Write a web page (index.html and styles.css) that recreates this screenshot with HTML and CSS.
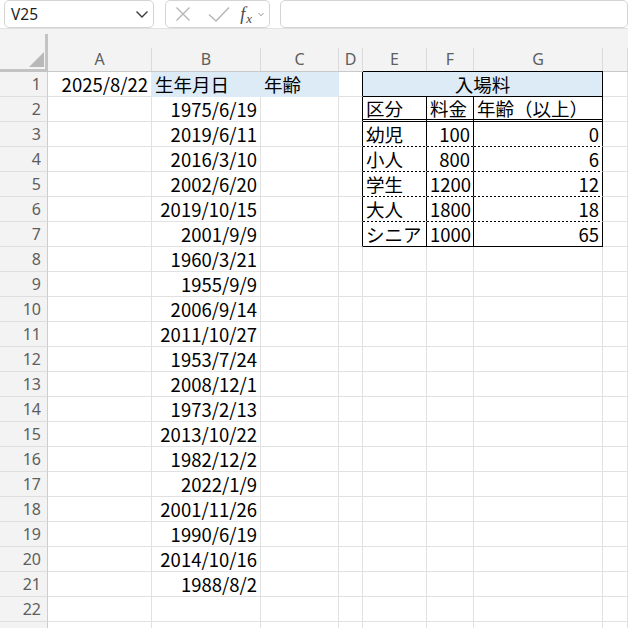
FILE: index.html
```html
<!DOCTYPE html>
<html lang="ja">
<head>
<meta charset="utf-8">
<title>Sheet</title>
<link rel="stylesheet" href="styles.css">
</head>
<body>
<div class="toolbar">
  <div class="namebox">
    <span class="ref">V25</span>
    <svg class="chev" width="14" height="10" viewBox="0 0 14 10"><polyline points="1.5,2.5 7,8 12.5,2.5" fill="none" stroke="#3a3a3a" stroke-width="1.4"/></svg>
  </div>
  <div class="fxbox">
    <svg width="16" height="16" viewBox="0 0 16 16"><path d="M1.5 1.5 L14.5 14.5 M14.5 1.5 L1.5 14.5" stroke="#b5b5b5" stroke-width="1.4" fill="none"/></svg>
    <svg width="22" height="16" viewBox="0 0 22 16"><polyline points="1,8.5 8,15 21,1.5" stroke="#b5b5b5" stroke-width="1.4" fill="none"/></svg>
    <span class="fx"><span class="f">f</span><span class="x">x</span></span>
    <svg width="6" height="5" viewBox="0 0 6 5"><polyline points="0.5,1 3,3.8 5.5,1" stroke="#9a9a9a" stroke-width="1" fill="none"/></svg>
  </div>
  <div class="formula"></div>
</div>

<div class="sheet">
  <div class="corner"><div class="cbox"><div class="tri"></div></div></div>
  <div class="colh"><span>A</span></div>
  <div class="colh"><span>B</span></div>
  <div class="colh"><span>C</span></div>
  <div class="colh"><span>D</span></div>
  <div class="colh tb"><span>E</span></div>
  <div class="colh tb"><span>F</span></div>
  <div class="colh tb"><span>G</span></div>
  <div class="colh"><span></span></div>

  <div class="rh">1</div><div class="c r fillA">2025/8/22</div><div class="c fill">生年月日</div><div class="c fill">年齢</div><div class="c dk"></div><div class="c t1 ctr">入場料</div><div class="c"></div>
  <div class="rh">2</div><div class="c"></div><div class="c r">1975/6/19</div><div class="c"></div><div class="c dk"></div><div class="c t2">区分</div><div class="c t2">料金</div><div class="c t2">年齢（以上）</div><div class="c"></div>
  <div class="rh">3</div><div class="c"></div><div class="c r">2019/6/11</div><div class="c"></div><div class="c dk"></div><div class="c td">幼児</div><div class="c td r">100</div><div class="c td r">0</div><div class="c"></div>
  <div class="rh">4</div><div class="c"></div><div class="c r">2016/3/10</div><div class="c"></div><div class="c dk"></div><div class="c td">小人</div><div class="c td r">800</div><div class="c td r">6</div><div class="c"></div>
  <div class="rh">5</div><div class="c"></div><div class="c r">2002/6/20</div><div class="c"></div><div class="c dk"></div><div class="c td">学生</div><div class="c td r">1200</div><div class="c td r">12</div><div class="c"></div>
  <div class="rh">6</div><div class="c"></div><div class="c r">2019/10/15</div><div class="c"></div><div class="c dk"></div><div class="c td">大人</div><div class="c td r">1800</div><div class="c td r">18</div><div class="c"></div>
  <div class="rh">7</div><div class="c"></div><div class="c r">2001/9/9</div><div class="c"></div><div class="c dk"></div><div class="c tl">シニア</div><div class="c tl r">1000</div><div class="c tl r">65</div><div class="c"></div>
  <div class="rh">8</div><div class="c"></div><div class="c r">1960/3/21</div><div class="c"></div><div class="c"></div><div class="c"></div><div class="c"></div><div class="c"></div><div class="c"></div>
  <div class="rh">9</div><div class="c"></div><div class="c r">1955/9/9</div><div class="c"></div><div class="c"></div><div class="c"></div><div class="c"></div><div class="c"></div><div class="c"></div>
  <div class="rh">10</div><div class="c"></div><div class="c r">2006/9/14</div><div class="c"></div><div class="c"></div><div class="c"></div><div class="c"></div><div class="c"></div><div class="c"></div>
  <div class="rh">11</div><div class="c"></div><div class="c r">2011/10/27</div><div class="c"></div><div class="c"></div><div class="c"></div><div class="c"></div><div class="c"></div><div class="c"></div>
  <div class="rh">12</div><div class="c"></div><div class="c r">1953/7/24</div><div class="c"></div><div class="c"></div><div class="c"></div><div class="c"></div><div class="c"></div><div class="c"></div>
  <div class="rh">13</div><div class="c"></div><div class="c r">2008/12/1</div><div class="c"></div><div class="c"></div><div class="c"></div><div class="c"></div><div class="c"></div><div class="c"></div>
  <div class="rh">14</div><div class="c"></div><div class="c r">1973/2/13</div><div class="c"></div><div class="c"></div><div class="c"></div><div class="c"></div><div class="c"></div><div class="c"></div>
  <div class="rh">15</div><div class="c"></div><div class="c r">2013/10/22</div><div class="c"></div><div class="c"></div><div class="c"></div><div class="c"></div><div class="c"></div><div class="c"></div>
  <div class="rh">16</div><div class="c"></div><div class="c r">1982/12/2</div><div class="c"></div><div class="c"></div><div class="c"></div><div class="c"></div><div class="c"></div><div class="c"></div>
  <div class="rh">17</div><div class="c"></div><div class="c r">2022/1/9</div><div class="c"></div><div class="c"></div><div class="c"></div><div class="c"></div><div class="c"></div><div class="c"></div>
  <div class="rh">18</div><div class="c"></div><div class="c r">2001/11/26</div><div class="c"></div><div class="c"></div><div class="c"></div><div class="c"></div><div class="c"></div><div class="c"></div>
  <div class="rh">19</div><div class="c"></div><div class="c r">1990/6/19</div><div class="c"></div><div class="c"></div><div class="c"></div><div class="c"></div><div class="c"></div><div class="c"></div>
  <div class="rh">20</div><div class="c"></div><div class="c r">2014/10/16</div><div class="c"></div><div class="c"></div><div class="c"></div><div class="c"></div><div class="c"></div><div class="c"></div>
  <div class="rh">21</div><div class="c"></div><div class="c r">1988/8/2</div><div class="c"></div><div class="c"></div><div class="c"></div><div class="c"></div><div class="c"></div><div class="c"></div>
  <div class="rh">22</div><div class="c"></div><div class="c"></div><div class="c"></div><div class="c"></div><div class="c"></div><div class="c"></div><div class="c"></div><div class="c"></div>
  <div class="rh"></div><div class="c"></div><div class="c"></div><div class="c"></div><div class="c"></div><div class="c"></div><div class="c"></div><div class="c"></div><div class="c"></div>
</div>
</body>
</html>
```
FILE: styles.css
```css
* { box-sizing: border-box; }
html, body {
  margin: 0;
  padding: 0;
  width: 628px;
  height: 628px;
  overflow: hidden;
  background: #ffffff;
}
body {
  font-family: "Noto Sans", "Noto Sans CJK JP", sans-serif;
}

/* ---------- toolbar ---------- */
.toolbar {
  height: 29px;
  display: flex;
  align-items: flex-start;
  background: #ffffff;
  border-bottom: 1px solid #e2e2e2;
}
.namebox {
  margin-left: 4px;
  width: 155px;
  height: 28px;
  border: 1px solid #d4d4d4;
  border-radius: 5px;
  display: flex;
  align-items: center;
  justify-content: space-between;
  padding: 0 4px 0 6px;
}
.ref {
  font-family: "Noto Sans", sans-serif;
  font-size: 15.5px;
  color: #1e1e1e;
  line-height: 20px;
}
.fxbox {
  margin-left: 11px;
  width: 108px;
  height: 28px;
  border: 1px solid #d4d4d4;
  border-radius: 5px;
  display: flex;
  align-items: center;
  padding-left: 9px;
}
.fxbox svg:nth-child(2) { margin-left: 17px; }
.fx {
  margin-left: 10px;
  font-family: "Liberation Serif", "DejaVu Serif", serif;
  font-style: italic;
  color: #4a4a4a;
  display: flex;
  align-items: flex-end;
  height: 18px;
}
.fx .f { font-size: 18px; line-height: 18px; }
.fx .x { font-size: 13px; line-height: 13px; margin-left: 1px; margin-bottom: -2px; }
.fxbox svg:last-child { margin-left: 6px; }
.formula {
  margin-left: 10px;
  width: 360px;
  height: 28px;
  border: 1px solid #d4d4d4;
  border-radius: 5px;
}

/* ---------- sheet ---------- */
.sheet {
  display: grid;
  grid-template-columns: 48px 104px 109px 78px 24px 64px 47px 129px 1fr;
  grid-template-rows: 43px repeat(23, 25px);
}
.corner {
  background: #f3f3f3;
  display: flex;
  align-items: flex-end;
}
.cbox {
  width: 48px;
  height: 38px;
  border-right: 3px solid #c3c3c3;
  border-bottom: 3px solid #c3c3c3;
  display: flex;
  justify-content: flex-end;
  align-items: flex-end;
  padding: 0 1px 2px 0;
}
.tri {
  width: 15px;
  height: 15px;
  background: #b8b8b8;
  clip-path: polygon(100% 0, 100% 100%, 0 100%);
}
.colh {
  background: #f3f3f3;
  border-bottom: 1px solid #c8c8c8;
  display: flex;
  align-items: flex-end;
}
.colh.tb { border-bottom-color: #000000; }
.colh span {
  flex: 1;
  height: 23px;
  border-right: 1px solid #dadada;
  text-align: center;
  font-family: "Noto Sans", sans-serif;
  font-size: 16px;
  line-height: 23px;
  color: #5e5e5e;
}
.rh {
  background: #f3f3f3;
  border-right: 1px solid #cdcdcd;
  border-bottom: 1px solid #dedede;
  text-align: right;
  padding-right: 6px;
  font-family: "Noto Sans", sans-serif;
  font-size: 16px;
  line-height: 24px;
  color: #5e5e5e;
}
.c {
  border-right: 1px solid #e1e1e1;
  border-bottom: 1px solid #e1e1e1;
  padding: 0 3px;
  font-family: "Noto Sans CJK JP", sans-serif;
  font-size: 18.5px;
  line-height: 24px;
  color: #000000;
  white-space: nowrap;
}
.r { text-align: right; }
.ctr { text-align: center; }
.fill {
  background: #ddebf7;
  border-right-color: #ddebf7;
  border-bottom-color: #ddebf7;
}
.fillA { border-right-color: #ddebf7; }
.dk { border-right-color: #000000; }
.t1 {
  grid-column: span 3;
  background: #ddebf7;
  border-right-color: #000000;
  border-bottom-color: #000000;
}
.t2 {
  border-right-color: #000000;
  border-bottom: 3px double #000000;
  line-height: 22px;
}
.td {
  border-right-color: #000000;
  border-bottom-color: transparent;
  background-image: linear-gradient(to right, #000000 2px, transparent 2px);
  background-size: 4px 1px;
  background-repeat: repeat-x;
  background-position: left bottom;
  background-origin: border-box;
}
.tl {
  border-right-color: #000000;
  border-bottom-color: #000000;
}
```
